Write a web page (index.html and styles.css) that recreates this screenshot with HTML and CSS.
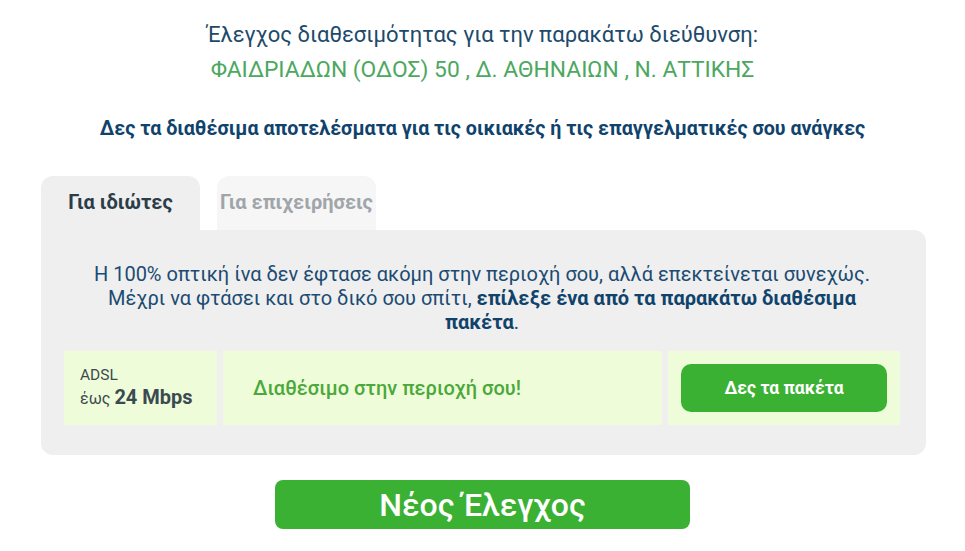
FILE: index.html
```html
<!DOCTYPE html>
<html lang="el">
<head>
  <meta charset="UTF-8">
  <meta name="viewport" content="width=device-width, initial-scale=1.0">
  <title>Έλεγχος διαθεσιμότητας</title>
  <link rel="stylesheet" href="styles.css">
</head>
<body>
  <main class="check">
    <div class="address">
      <p class="address-label">Έλεγχος διαθεσιμότητας για την παρακάτω διεύθυνση:</p>
      <p class="address-value">ΦΑΙΔΡΙΑΔΩΝ (ΟΔΟΣ) 50 , Δ. ΑΘΗΝΑΙΩΝ , Ν. ΑΤΤΙΚΗΣ</p>
    </div>

    <h2 class="lead">Δες τα διαθέσιμα αποτελέσματα για τις οικιακές ή τις επαγγελματικές σου ανάγκες</h2>

    <div class="results">
      <div class="tabs">
        <button class="tab active">Για ιδιώτες</button>
        <button class="tab">Για επιχειρήσεις</button>
      </div>

      <div class="panel">
        <p class="notice">
          Η 100% οπτική ίνα δεν έφτασε ακόμη στην περιοχή σου, αλλά επεκτείνεται συνεχώς.
          Μέχρι να φτάσει και στο δικό σου σπίτι, <strong>επίλεξε ένα από τα παρακάτω διαθέσιμα πακέτα</strong>.
        </p>

        <div class="offer">
          <div class="cell tech">
            <span class="tech-name">ADSL</span>
            <span class="tech-speed">έως <b>24 Mbps</b></span>
          </div>
          <div class="cell status">Διαθέσιμο στην περιοχή σου!</div>
          <div class="cell action">
            <button class="btn-packages">Δες τα πακέτα</button>
          </div>
        </div>
      </div>
    </div>

    <div class="again">
      <button class="btn-again">Νέος Έλεγχος</button>
    </div>
  </main>
</body>
</html>
```

FILE: styles.css
```css
:root {
  --blue: #1b4b73;
  --blue-dark: #10436c;
  --green: #3bb133;
  --green-text: #4ca85f;
  --panel: #efefef;
  --cell: #effcd9;
}

body {
  margin: 0;
  padding: 0;
  background: #fff;
  font-family: Roboto, "Noto Sans", sans-serif;
  color: var(--blue);
}

p {
  margin: 0;
}

.check {
  padding-top: 21px;
}

.address {
  text-align: center;
}

.address-label {
  font-size: 22px;
  line-height: 28px;
  color: #1d4a6c;
}

.address-value {
  margin-top: 7px;
  font-size: 22.8px;
  line-height: 28px;
  font-weight: 400;
  color: var(--green-text);
}

.lead {
  margin: 33px 0 0;
  text-align: center;
  font-size: 19.7px;
  line-height: 24px;
  font-weight: 700;
  color: var(--blue-dark);
}

.results {
  margin: 35px 39px 0 41px;
}

.tabs {
  display: flex;
  gap: 17px;
}

.tab {
  width: 159px;
  height: 54px;
  border: none;
  border-radius: 12px 12px 0 0;
  background: #f6f6f6;
  font-family: Roboto, "Noto Sans", sans-serif;
  font-size: 20px;
  font-weight: 700;
  color: #a0a5aa;
  padding: 0 0 2px;
}

.tab.active {
  background: var(--panel);
  color: #2b3d48;
}

.panel {
  background: var(--panel);
  border-radius: 0 12px 12px 12px;
  padding: 32px 26px 30px 23px;
}

.notice {
  max-width: 805px;
  margin: 0 auto;
  text-align: center;
  font-size: 20px;
  line-height: 24px;
  color: var(--blue);
}

.notice strong {
  color: var(--blue-dark);
}

.offer {
  display: grid;
  grid-template-columns: 153px 1fr 232px;
  gap: 6px;
  margin-top: 17px;
  height: 74px;
}

.cell {
  background: var(--cell);
  display: flex;
  align-items: center;
}

.tech {
  flex-direction: column;
  align-items: flex-start;
  justify-content: center;
  padding-left: 16px;
  color: #3b4a50;
}

.tech-name {
  font-size: 15.5px;
  line-height: 20px;
}

.tech-speed {
  font-size: 16px;
  line-height: 24px;
}

.tech-speed b {
  font-size: 20px;
}

.status {
  padding-left: 30px;
  font-size: 20px;
  font-weight: 500;
  color: #4ba83a;
}

.action {
  justify-content: center;
}

.btn-packages {
  width: 206px;
  height: 48px;
  border: none;
  border-radius: 10px;
  background: var(--green);
  color: #fff;
  font-family: Roboto, "Noto Sans", sans-serif;
  font-size: 17.5px;
  font-weight: 700;
}

.again {
  display: flex;
  justify-content: center;
  margin-top: 25px;
}

.btn-again {
  width: 415px;
  height: 49px;
  border: none;
  border-radius: 8px;
  background: var(--green);
  color: #fff;
  font-family: Roboto, "Noto Sans", sans-serif;
  font-size: 32px;
  font-weight: 500;
}
```
